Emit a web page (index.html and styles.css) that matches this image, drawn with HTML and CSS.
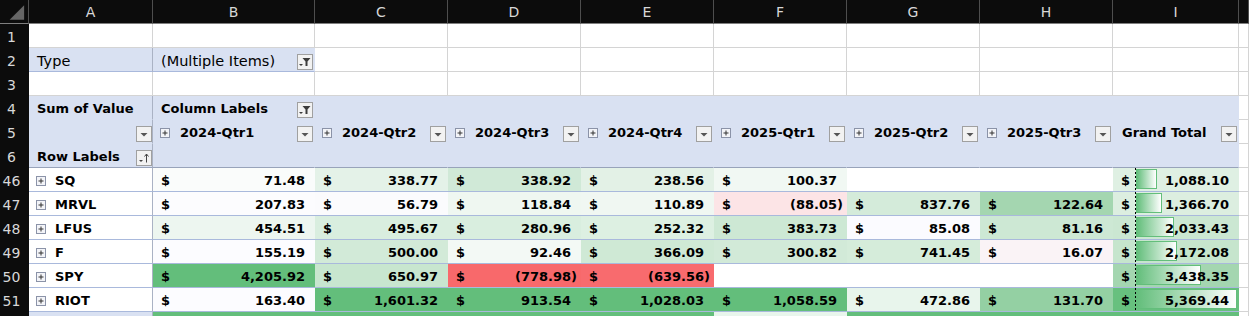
FILE: index.html
```html
<!DOCTYPE html>
<html lang="en">
<head>
    <meta charset="UTF-8">
    <title>Pivot - Sum of Value</title>
    <link rel="stylesheet" href="styles.css">
</head>
<body>
<div class="sheet">
    <!-- column letters -->
    <div class="row head">
        <div class="c corner"><svg width="29" height="23" viewBox="0 0 29 23"><path d="M25 5V20H10z" fill="#666"/></svg></div>
        <div class="c col">A</div>
        <div class="c col">B</div>
        <div class="c col">C</div>
        <div class="c col">D</div>
        <div class="c col">E</div>
        <div class="c col">F</div>
        <div class="c col">G</div>
        <div class="c col">H</div>
        <div class="c col">I</div>
        <div class="c col"></div>
    </div>

    <div class="row">
        <div class="c num">1</div>
        <div class="c"></div><div class="c"></div><div class="c"></div><div class="c"></div><div class="c"></div>
        <div class="c"></div><div class="c"></div><div class="c"></div><div class="c"></div><div class="c"></div>
    </div>

    <!-- report filter -->
    <div class="row">
        <div class="c num">2</div>
        <div class="c pv pv-a r2"><span class="txt">Type</span></div>
        <div class="c pv r2"><span class="txt">(Multiple Items)</span>
            <svg class="btn" width="16" height="16" viewBox="0 0 16 16"><rect x="0.5" y="0.5" width="15" height="15" fill="#f2f2f2" stroke="#a0a0a0"/><path d="M5.5 4h8l-3 3.5v4.5h-2v-4.5z" fill="#3c3c3c"/><path d="M2 10h4l-2 2z" fill="#3c3c3c"/></svg>
        </div>
        <div class="c"></div><div class="c"></div><div class="c"></div><div class="c"></div>
        <div class="c"></div><div class="c"></div><div class="c"></div><div class="c"></div>
    </div>

    <div class="row">
        <div class="c num">3</div>
        <div class="c"></div><div class="c"></div><div class="c"></div><div class="c"></div><div class="c"></div>
        <div class="c"></div><div class="c"></div><div class="c"></div><div class="c"></div><div class="c"></div>
    </div>

    <!-- pivot header -->
    <div class="row">
        <div class="c num">4</div>
        <div class="c pv pv-a"><span class="txt b">Sum of Value</span></div>
        <div class="c pv"><span class="txt b">Column Labels</span>
            <svg class="btn" width="16" height="16" viewBox="0 0 16 16"><rect x="0.5" y="0.5" width="15" height="15" fill="#f2f2f2" stroke="#a0a0a0"/><path d="M5.5 4h8l-3 3.5v4.5h-2v-4.5z" fill="#3c3c3c"/><path d="M2 10h4l-2 2z" fill="#3c3c3c"/></svg>
        </div>
        <div class="c pv"></div><div class="c pv"></div><div class="c pv"></div><div class="c pv"></div>
        <div class="c pv"></div><div class="c pv"></div><div class="c pv"></div>
        <div class="c"></div>
    </div>

    <div class="row">
        <div class="c num">5</div>
        <div class="c pv pv-a">
            <svg class="btn flush" width="16" height="16" viewBox="0 0 16 16"><rect x="0.5" y="0.5" width="15" height="15" fill="#f2f2f2" stroke="#a0a0a0"/><path d="M4.5 7h7l-3.5 3.5z" fill="#555"/></svg>
        </div>
        <div class="c pv"><svg class="pm" width="10" height="10" viewBox="0 0 10 10"><rect x="0.5" y="0.5" width="9" height="9" fill="#f3f4f8" stroke="#8b93a8"/><path d="M2.5 5h5M5 2.5v5" stroke="#333"/></svg><span class="txt b qtr">2024-Qtr1</span>
            <svg class="btn" width="16" height="16" viewBox="0 0 16 16"><rect x="0.5" y="0.5" width="15" height="15" fill="#f2f2f2" stroke="#a0a0a0"/><path d="M4.5 7h7l-3.5 3.5z" fill="#555"/></svg></div>
        <div class="c pv"><svg class="pm" width="10" height="10" viewBox="0 0 10 10"><rect x="0.5" y="0.5" width="9" height="9" fill="#f3f4f8" stroke="#8b93a8"/><path d="M2.5 5h5M5 2.5v5" stroke="#333"/></svg><span class="txt b qtr">2024-Qtr2</span>
            <svg class="btn" width="16" height="16" viewBox="0 0 16 16"><rect x="0.5" y="0.5" width="15" height="15" fill="#f2f2f2" stroke="#a0a0a0"/><path d="M4.5 7h7l-3.5 3.5z" fill="#555"/></svg></div>
        <div class="c pv"><svg class="pm" width="10" height="10" viewBox="0 0 10 10"><rect x="0.5" y="0.5" width="9" height="9" fill="#f3f4f8" stroke="#8b93a8"/><path d="M2.5 5h5M5 2.5v5" stroke="#333"/></svg><span class="txt b qtr">2024-Qtr3</span>
            <svg class="btn" width="16" height="16" viewBox="0 0 16 16"><rect x="0.5" y="0.5" width="15" height="15" fill="#f2f2f2" stroke="#a0a0a0"/><path d="M4.5 7h7l-3.5 3.5z" fill="#555"/></svg></div>
        <div class="c pv"><svg class="pm" width="10" height="10" viewBox="0 0 10 10"><rect x="0.5" y="0.5" width="9" height="9" fill="#f3f4f8" stroke="#8b93a8"/><path d="M2.5 5h5M5 2.5v5" stroke="#333"/></svg><span class="txt b qtr">2024-Qtr4</span>
            <svg class="btn" width="16" height="16" viewBox="0 0 16 16"><rect x="0.5" y="0.5" width="15" height="15" fill="#f2f2f2" stroke="#a0a0a0"/><path d="M4.5 7h7l-3.5 3.5z" fill="#555"/></svg></div>
        <div class="c pv"><svg class="pm" width="10" height="10" viewBox="0 0 10 10"><rect x="0.5" y="0.5" width="9" height="9" fill="#f3f4f8" stroke="#8b93a8"/><path d="M2.5 5h5M5 2.5v5" stroke="#333"/></svg><span class="txt b qtr">2025-Qtr1</span>
            <svg class="btn" width="16" height="16" viewBox="0 0 16 16"><rect x="0.5" y="0.5" width="15" height="15" fill="#f2f2f2" stroke="#a0a0a0"/><path d="M4.5 7h7l-3.5 3.5z" fill="#555"/></svg></div>
        <div class="c pv"><svg class="pm" width="10" height="10" viewBox="0 0 10 10"><rect x="0.5" y="0.5" width="9" height="9" fill="#f3f4f8" stroke="#8b93a8"/><path d="M2.5 5h5M5 2.5v5" stroke="#333"/></svg><span class="txt b qtr">2025-Qtr2</span>
            <svg class="btn" width="16" height="16" viewBox="0 0 16 16"><rect x="0.5" y="0.5" width="15" height="15" fill="#f2f2f2" stroke="#a0a0a0"/><path d="M4.5 7h7l-3.5 3.5z" fill="#555"/></svg></div>
        <div class="c pv"><svg class="pm" width="10" height="10" viewBox="0 0 10 10"><rect x="0.5" y="0.5" width="9" height="9" fill="#f3f4f8" stroke="#8b93a8"/><path d="M2.5 5h5M5 2.5v5" stroke="#333"/></svg><span class="txt b qtr">2025-Qtr3</span>
            <svg class="btn" width="16" height="16" viewBox="0 0 16 16"><rect x="0.5" y="0.5" width="15" height="15" fill="#f2f2f2" stroke="#a0a0a0"/><path d="M4.5 7h7l-3.5 3.5z" fill="#555"/></svg></div>
        <div class="c pv"><span class="txt b gt">Grand Total</span>
            <svg class="btn" width="16" height="16" viewBox="0 0 16 16"><rect x="0.5" y="0.5" width="15" height="15" fill="#f2f2f2" stroke="#a0a0a0"/><path d="M4.5 7h7l-3.5 3.5z" fill="#555"/></svg></div>
        <div class="c"></div>
    </div>

    <div class="row">
        <div class="c num">6</div>
        <div class="c pv pv-a r6"><span class="txt b">Row Labels</span>
            <svg class="btn flush" width="16" height="16" viewBox="0 0 16 16"><rect x="0.5" y="0.5" width="15" height="15" fill="#f2f2f2" stroke="#a0a0a0"/><path d="M3 10h4l-2 2z" fill="#444"/><path d="M10.5 12.5V4M8.5 6.5l2-2.5 2 2.5" stroke="#444" fill="none"/></svg>
        </div>
        <div class="c pv r6"></div><div class="c pv r6"></div><div class="c pv r6"></div><div class="c pv r6"></div>
        <div class="c pv r6"></div><div class="c pv r6"></div><div class="c pv r6"></div><div class="c pv r6"></div>
        <div class="c"></div>
    </div>

    <!-- data rows -->
    <div class="row">
        <div class="c num">46</div>
        <div class="c lbl"><svg class="pm" width="10" height="10" viewBox="0 0 10 10"><rect x="0.5" y="0.5" width="9" height="9" fill="#f3f4f8" stroke="#8b93a8"/><path d="M2.5 5h5M5 2.5v5" stroke="#333"/></svg><span class="txt b">SQ</span></div>
        <div class="c d" style="background:#fafcfb"><span class="cur">$</span><span class="val">71.48<i>)</i></span></div>
        <div class="c d" style="background:#e4f2e8"><span class="cur">$</span><span class="val">338.77<i>)</i></span></div>
        <div class="c d" style="background:#d0e9d7"><span class="cur">$</span><span class="val">338.92<i>)</i></span></div>
        <div class="c d" style="background:#e3f1e6"><span class="cur">$</span><span class="val">238.56<i>)</i></span></div>
        <div class="c d" style="background:#f1f8f3"><span class="cur">$</span><span class="val">100.37<i>)</i></span></div>
        <div class="c d"></div>
        <div class="c d"></div>
        <div class="c d tot" style="background:#dff0e3"><span class="cur">$</span><span class="bar" style="width:21px"></span><span class="val">1,088.10<i>)</i></span></div>
        <div class="c"></div>
    </div>

    <div class="row">
        <div class="c num">47</div>
        <div class="c lbl"><svg class="pm" width="10" height="10" viewBox="0 0 10 10"><rect x="0.5" y="0.5" width="9" height="9" fill="#f3f4f8" stroke="#8b93a8"/><path d="M2.5 5h5M5 2.5v5" stroke="#333"/></svg><span class="txt b">MRVL</span></div>
        <div class="c d" style="background:#fcfcfe"><span class="cur">$</span><span class="val">207.83<i>)</i></span></div>
        <div class="c d" style="background:#fbfbfd"><span class="cur">$</span><span class="val">56.79<i>)</i></span></div>
        <div class="c d" style="background:#eff7f1"><span class="cur">$</span><span class="val">118.84<i>)</i></span></div>
        <div class="c d" style="background:#f0f7f2"><span class="cur">$</span><span class="val">110.89<i>)</i></span></div>
        <div class="c d" style="background:#fce4e6"><span class="cur">$</span><span class="val">(88.05)</span></div>
        <div class="c d" style="background:#d4ebda"><span class="cur">$</span><span class="val">837.76<i>)</i></span></div>
        <div class="c d" style="background:#a4d6b0"><span class="cur">$</span><span class="val">122.64<i>)</i></span></div>
        <div class="c d tot" style="background:#dceee0"><span class="cur">$</span><span class="bar" style="width:26px"></span><span class="val">1,366.70<i>)</i></span></div>
        <div class="c"></div>
    </div>

    <div class="row">
        <div class="c num">48</div>
        <div class="c lbl"><svg class="pm" width="10" height="10" viewBox="0 0 10 10"><rect x="0.5" y="0.5" width="9" height="9" fill="#f3f4f8" stroke="#8b93a8"/><path d="M2.5 5h5M5 2.5v5" stroke="#333"/></svg><span class="txt b">LFUS</span></div>
        <div class="c d" style="background:#edf6f0"><span class="cur">$</span><span class="val">454.51<i>)</i></span></div>
        <div class="c d" style="background:#d9eedf"><span class="cur">$</span><span class="val">495.67<i>)</i></span></div>
        <div class="c d" style="background:#d9eedf"><span class="cur">$</span><span class="val">280.96<i>)</i></span></div>
        <div class="c d" style="background:#ddf0e2"><span class="cur">$</span><span class="val">252.32<i>)</i></span></div>
        <div class="c d" style="background:#cde8d4"><span class="cur">$</span><span class="val">383.73<i>)</i></span></div>
        <div class="c d" style="background:#fbfbff"><span class="cur">$</span><span class="val">85.08<i>)</i></span></div>
        <div class="c d" style="background:#cde8d4"><span class="cur">$</span><span class="val">81.16<i>)</i></span></div>
        <div class="c d tot" style="background:#cbe7d2"><span class="cur">$</span><span class="bar" style="width:38px"></span><span class="val">2,033.43<i>)</i></span></div>
        <div class="c"></div>
    </div>

    <div class="row">
        <div class="c num">49</div>
        <div class="c lbl"><svg class="pm" width="10" height="10" viewBox="0 0 10 10"><rect x="0.5" y="0.5" width="9" height="9" fill="#f3f4f8" stroke="#8b93a8"/><path d="M2.5 5h5M5 2.5v5" stroke="#333"/></svg><span class="txt b">F</span></div>
        <div class="c d" style="background:#fcfcff"><span class="cur">$</span><span class="val">155.19<i>)</i></span></div>
        <div class="c d" style="background:#d2ead8"><span class="cur">$</span><span class="val">500.00<i>)</i></span></div>
        <div class="c d" style="background:#f3f9f5"><span class="cur">$</span><span class="val">92.46<i>)</i></span></div>
        <div class="c d" style="background:#cfe9d5"><span class="cur">$</span><span class="val">366.09<i>)</i></span></div>
        <div class="c d" style="background:#d2ead8"><span class="cur">$</span><span class="val">300.82<i>)</i></span></div>
        <div class="c d" style="background:#d5ecda"><span class="cur">$</span><span class="val">741.45<i>)</i></span></div>
        <div class="c d" style="background:#faf3f6"><span class="cur">$</span><span class="val">16.07<i>)</i></span></div>
        <div class="c d tot" style="background:#c6e5cd"><span class="cur">$</span><span class="bar" style="width:41px"></span><span class="val">2,172.08<i>)</i></span></div>
        <div class="c"></div>
    </div>

    <div class="row">
        <div class="c num">50</div>
        <div class="c lbl"><svg class="pm" width="10" height="10" viewBox="0 0 10 10"><rect x="0.5" y="0.5" width="9" height="9" fill="#f3f4f8" stroke="#8b93a8"/><path d="M2.5 5h5M5 2.5v5" stroke="#333"/></svg><span class="txt b">SPY</span></div>
        <div class="c d" style="background:#63be7b"><span class="cur">$</span><span class="val">4,205.92<i>)</i></span></div>
        <div class="c d" style="background:#c8e6cf"><span class="cur">$</span><span class="val">650.97<i>)</i></span></div>
        <div class="c d" style="background:#f8696b"><span class="cur">$</span><span class="val">(778.98)</span></div>
        <div class="c d" style="background:#f86b6e"><span class="cur">$</span><span class="val">(639.56)</span></div>
        <div class="c d"></div>
        <div class="c d"></div>
        <div class="c d"></div>
        <div class="c d tot" style="background:#a4d6b0"><span class="cur">$</span><span class="bar" style="width:65px"></span><span class="val">3,438.35<i>)</i></span></div>
        <div class="c"></div>
    </div>

    <div class="row">
        <div class="c num">51</div>
        <div class="c lbl"><svg class="pm" width="10" height="10" viewBox="0 0 10 10"><rect x="0.5" y="0.5" width="9" height="9" fill="#f3f4f8" stroke="#8b93a8"/><path d="M2.5 5h5M5 2.5v5" stroke="#333"/></svg><span class="txt b">RIOT</span></div>
        <div class="c d" style="background:#fcfcff"><span class="cur">$</span><span class="val">163.40<i>)</i></span></div>
        <div class="c d" style="background:#63be7b"><span class="cur">$</span><span class="val">1,601.32<i>)</i></span></div>
        <div class="c d" style="background:#63be7b"><span class="cur">$</span><span class="val">913.54<i>)</i></span></div>
        <div class="c d" style="background:#63be7b"><span class="cur">$</span><span class="val">1,028.03<i>)</i></span></div>
        <div class="c d" style="background:#63be7b"><span class="cur">$</span><span class="val">1,058.59<i>)</i></span></div>
        <div class="c d" style="background:#e8f5ec"><span class="cur">$</span><span class="val">472.86<i>)</i></span></div>
        <div class="c d" style="background:#94d0a3"><span class="cur">$</span><span class="val">131.70<i>)</i></span></div>
        <div class="c d tot" style="background:#67c07e"><span class="cur">$</span><span class="bar" style="width:101px"></span><span class="val">5,369.44<i>)</i></span></div>
        <div class="c"></div>
    </div>

    <!-- next row, only its top edge shows in the window -->
    <div class="row">
        <div class="c num"></div>
        <div class="c pv pv-a"></div>
        <div class="c d" style="background:#63be7b"></div>
        <div class="c d" style="background:#63be7b"></div>
        <div class="c d" style="background:#63be7b"></div>
        <div class="c d" style="background:#63be7b"></div>
        <div class="c d" style="background:#e8f5ec"></div>
        <div class="c d" style="background:#63be7b"></div>
        <div class="c d" style="background:#63be7b"></div>
        <div class="c d" style="background:#63be7b"></div>
        <div class="c"></div>
    </div>
</div>
</body>
</html>
```

FILE: styles.css
```css
body {
    margin: 0;
    background-color: #fff;
    font-family: "DejaVu Sans", Verdana, sans-serif;
    overflow: hidden;
}
.sheet {
    width: 1249px;
}
.row {
    display: grid;
    grid-template-columns: 29px 124px 162px repeat(6, 133px) 126px 1fr;
    height: 24px;
}
.c {
    box-sizing: border-box;
    height: 24px;
    min-width: 0;
    display: flex;
    align-items: flex-start;
    padding-top: 3px;
    border-right: 1px solid #d4d4d4;
    border-bottom: 1px solid #d4d4d4;
    background-color: #fff;
    color: #000;
    font-size: 14px;
    line-height: 20px;
    white-space: nowrap;
    overflow: hidden;
}

/* sheet headers */
.head .c {
    padding-top: 2px;
    background-color: #0c0c0c;
    border-right-color: #4e4e4e;
    border-bottom-color: #7f7f7f;
}
.corner {
    padding-top: 0 !important;
}
.col {
    justify-content: center;
    color: #d8d8d8;
}
.num {
    justify-content: center;
    padding-right: 5px;
    background-color: #0c0c0c;
    border-color: #0c0c0c;
    color: #d8d8d8;
}

/* pivot header band */
.pv {
    background-color: #d9e1f2;
    border-color: #d9e1f2;
}
.pv-a {
    border-right-color: #aab2c4;
}
.r2 {
    border-bottom-color: #a9b9dc;
}
.r6 {
    border-bottom-color: #98a3ba;
}
.txt {
    padding-left: 8px;
    font-size: 14.5px;
}
.txt.b {
    font-size: 13px;
    font-weight: bold;
}
.txt.qtr {
    padding-left: 10px;
}
.txt.gt {
    padding-left: 9px;
}
.btn {
    flex: none;
    align-self: flex-end;
    margin: 0 1px 1px auto;
}
.btn.flush {
    margin-right: 0;
}
.pm {
    flex: none;
    margin: 5px 0 0 7px;
}

/* data rows */
.lbl {
    border-right-color: #aab2c4;
    border-bottom-color: #a9b9dc;
}
.lbl .txt {
    padding-left: 9px;
}
.d {
    border-right: 0;
    border-bottom-color: #a9b9dc;
    font-size: 13px;
    font-weight: bold;
}
.cur {
    padding-left: 8px;
}
.val {
    margin-left: auto;
    padding-right: 4px;
    position: relative;
}
.val i {
    font-style: normal;
    visibility: hidden;
}

/* grand total column with data bars */
.tot {
    position: relative;
    overflow: visible;
}
.tot::before {
    content: "";
    position: absolute;
    left: 22px;
    top: 0;
    bottom: -1px;
    width: 1px;
    background: repeating-linear-gradient(to bottom, #000 0 2px, transparent 2px 4px);
}
.bar {
    position: absolute;
    left: 23px;
    top: 1px;
    height: 20px;
    box-sizing: border-box;
    border: 1px solid #63be7b;
    background: linear-gradient(to right, #63be7b, #fff);
}
```
